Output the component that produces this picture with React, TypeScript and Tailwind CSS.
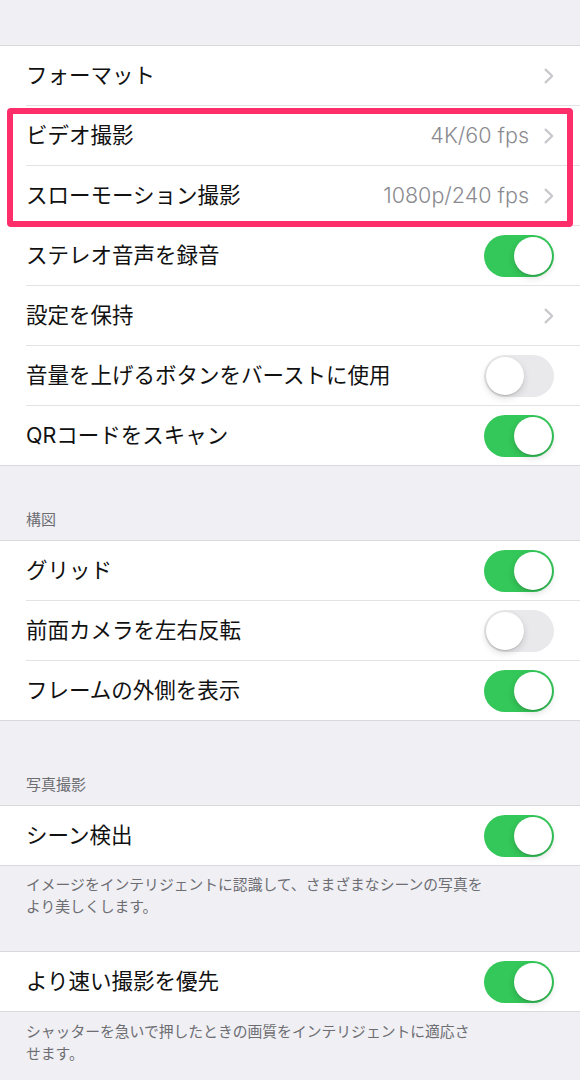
import React from "react";

type RowProps = {
  label: string;
  value?: string;
  chevron?: boolean;
  toggle?: boolean;
  on?: boolean;
  last?: boolean;
};

const Chevron = () => (
  <svg width="10" height="16" viewBox="0 0 10 16" fill="none" className="shrink-0">
    <path d="M1.6 1.6 L8.2 8 L1.6 14.4" stroke="#c7c7cc" strokeWidth="2.2" strokeLinecap="round" strokeLinejoin="round" />
  </svg>
);

const Toggle = ({ on }: { on?: boolean }) => (
  <div
    className={
      on
        ? "relative w-[70px] h-[42px] rounded-full bg-[#34c759] shrink-0"
        : "relative w-[70px] h-[42px] rounded-full bg-[#e9e9eb] shrink-0"
    }
  >
    <div
      className={
        on
          ? "absolute top-[2px] right-[2px] w-[38px] h-[38px] rounded-full bg-white shadow-[0_3px_7px_rgba(0,0,0,0.15),0_1px_1px_rgba(0,0,0,0.12)]"
          : "absolute top-[2px] left-[2px] w-[38px] h-[38px] rounded-full bg-white shadow-[0_3px_7px_rgba(0,0,0,0.15),0_1px_1px_rgba(0,0,0,0.12)]"
      }
    />
  </div>
);

const Row = ({ label, value, chevron, toggle, on, last }: RowProps) => (
  <div className={last ? "h-[60px] flex items-center pl-[26px] border-b border-[#d9d9dd]" : "h-[60px] pl-[26px]"}>
    <div
      className={
        last
          ? "flex-1 h-full flex items-center justify-between pr-[26px]"
          : "h-full flex items-center justify-between pr-[26px] border-b border-[#e3e3e6]"
      }
    >
      <span className="text-[21.5px] leading-none text-[#111] whitespace-nowrap">{label}</span>
      <div className="flex items-center gap-[15px]">
        {value && <span className="text-[21.5px] leading-none font-light text-[#8a8a8f]">{value}</span>}
        {chevron && <Chevron />}
        {toggle && <Toggle on={on} />}
      </div>
    </div>
  </div>
);

const Header = ({ text, h }: { text: string; h: string }) => (
  <div className={`${h} flex items-end pl-[26px] pb-[10px]`}>
    <span className="text-[15px] leading-[20px] text-[#6d6d72]">{text}</span>
  </div>
);

export default function App() {
  return (
    <div className="w-[580px] min-h-[1080px] bg-[#efeff4] font-['Inter','Noto_Sans_CJK_JP',sans-serif] overflow-hidden">
      <div className="h-[45px]" />

      {/* camera settings */}
      <div className="bg-white border-t border-[#d9d9dd]">
        <Row label="フォーマット" chevron />
        <div className="relative">
          <Row label="ビデオ撮影" value="4K/60 fps" chevron />
          <Row label="スローモーション撮影" value="1080p/240 fps" chevron />
          <div className="absolute left-[7px] right-[7px] top-[2px] h-[119px] border-[6px] border-[#fe2e6b] rounded-[4px] pointer-events-none" />
        </div>
        <Row label="ステレオ音声を録音" toggle on />
        <Row label="設定を保持" chevron />
        <Row label="音量を上げるボタンをバーストに使用" toggle />
        <Row label="QRコードをスキャン" toggle on last />
      </div>

      <Header text="構図" h="h-[74px]" />
      <div className="bg-white border-t border-[#d9d9dd]">
        <Row label="グリッド" toggle on />
        <Row label="前面カメラを左右反転" toggle />
        <Row label="フレームの外側を表示" toggle on last />
      </div>

      <Header text="写真撮影" h="h-[84px]" />
      <div className="bg-white border-t border-[#d9d9dd]">
        <Row label="シーン検出" toggle on last />
      </div>
      <div className="h-[85px] pl-[26px] pt-[8px] text-[14.8px] leading-[22px] text-[#6d6d72] whitespace-nowrap">
        イメージをインテリジェントに認識して、さまざまなシーンの写真を
        <br />
        より美しくします。
      </div>

      <div className="bg-white border-t border-[#d9d9dd]">
        <Row label="より速い撮影を優先" toggle on last />
      </div>
      <div className="pl-[26px] pt-[9px] text-[14.8px] leading-[22px] text-[#6d6d72] whitespace-nowrap">
        シャッターを急いで押したときの画質をインテリジェントに適応さ
        <br />
        せます。
      </div>
    </div>
  );
}
